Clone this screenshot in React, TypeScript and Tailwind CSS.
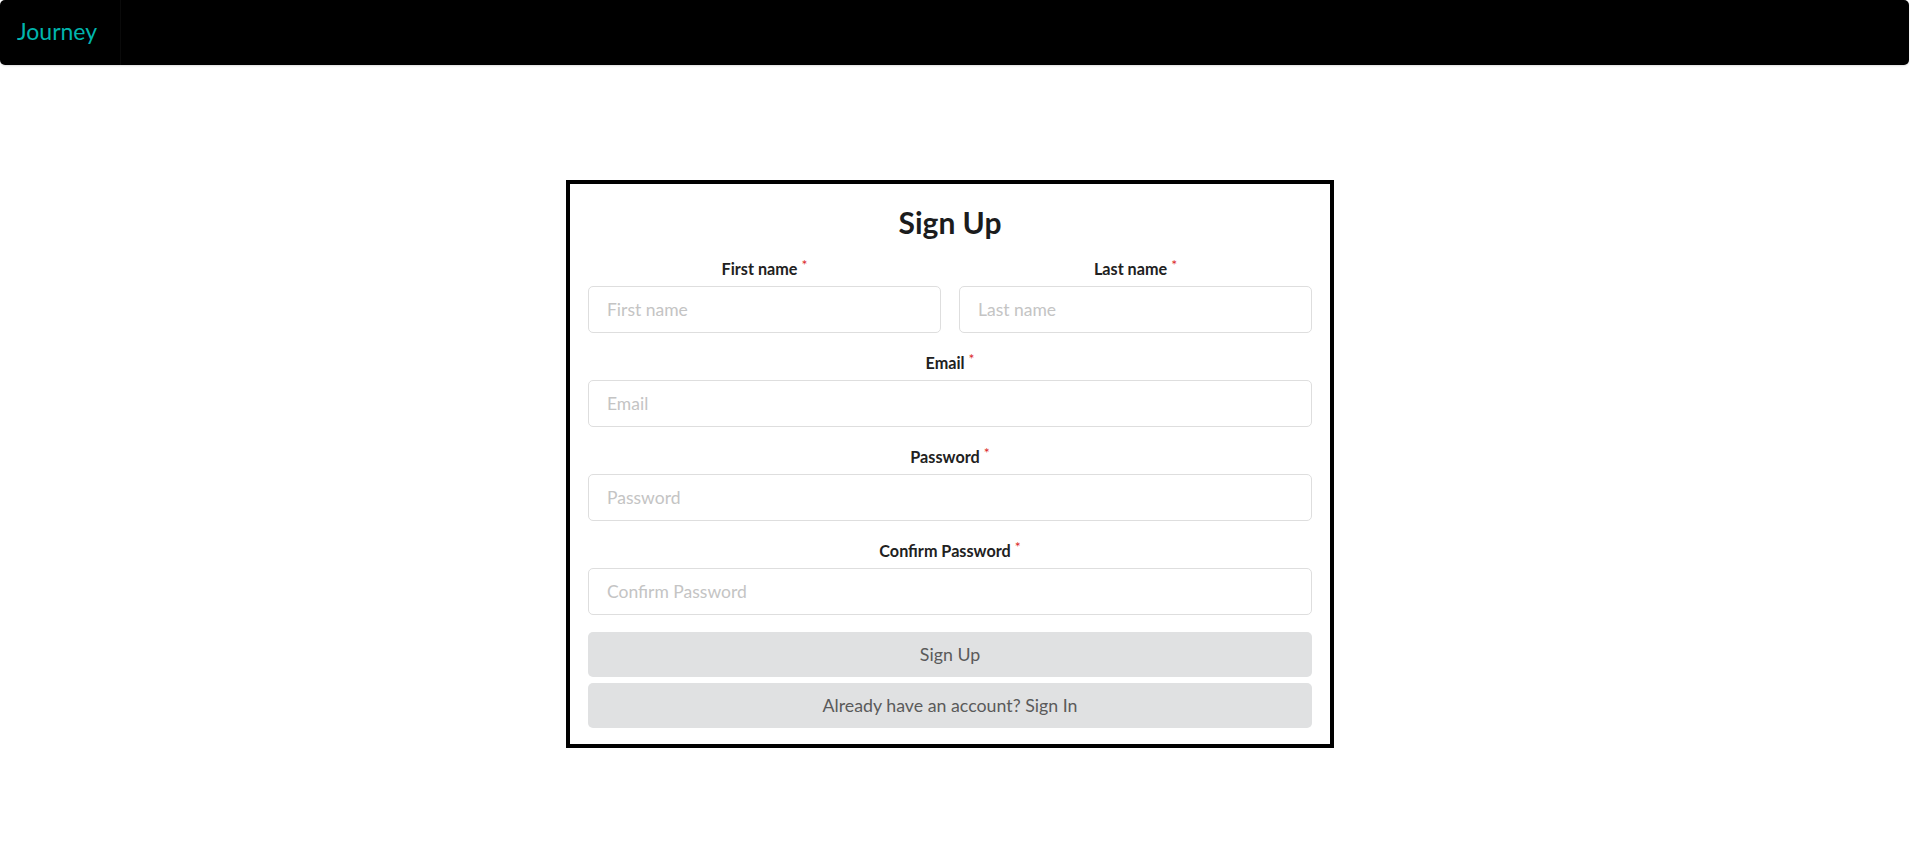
import React from "react";

function Field({ label, placeholder, type = "text" }: { label: string; placeholder: string; type?: string }) {
  return (
    <div className="flex flex-col flex-1 min-w-0">
      <label className="h-[18px] leading-[18px] mb-[8px] text-center text-[16.2px] font-bold text-[#212121]">
        {label}
        <span className="relative -top-[5px] ml-[4px] text-[14px] font-normal text-[#db2828]">*</span>
      </label>
      <input
        type={type}
        placeholder={placeholder}
        className="h-[47px] w-full rounded-[5px] border border-[#dedede] bg-white px-[18px] text-[17.5px] text-[#212121] outline-none placeholder:text-[#c4c4c4]"
      />
    </div>
  );
}

export default function App() {
  return (
    <div className="min-h-[861px] bg-white" style={{ fontFamily: "Lato, 'Noto Sans', sans-serif" }}>
      <header className="mr-[1px] flex h-[65px] items-stretch rounded-[5px] bg-black shadow-[0_1px_2px_0_rgba(34,36,38,0.15)]">
        <div className="flex w-[121px] items-center border-r border-[#0a0a0a] pl-[17px] pb-[2px] text-[23px] text-[#00b5ad]">
          Journey
        </div>
      </header>

      <div className="flex justify-center pr-[10px] pt-[115px]">
        <div className="w-[768px] border-[4px] border-black bg-white px-[18px] pt-[20px] pb-[16px]">
          <h1 className="h-[36px] text-center text-[30px] font-bold leading-[36px] text-[#1b1c1d]">Sign Up</h1>
          <div className="mt-[20px] flex flex-col gap-[21px]">
            <div className="flex gap-[18px]">
              <Field label="First name" placeholder="First name" />
              <Field label="Last name" placeholder="Last name" />
            </div>
            <Field label="Email" placeholder="Email" type="email" />
            <Field label="Password" placeholder="Password" type="password" />
            <Field label="Confirm Password" placeholder="Confirm Password" type="password" />
          </div>
          <div className="mt-[17px] flex flex-col gap-[6px]">
            <button className="h-[45px] w-full rounded-[5px] bg-[#e0e1e2] text-[17.8px] text-[#5a5a5a]">Sign Up</button>
            <button className="h-[45px] w-full rounded-[5px] bg-[#e0e1e2] text-[17.8px] text-[#5a5a5a]">
              Already have an account? Sign In
            </button>
          </div>
        </div>
      </div>
    </div>
  );
}
